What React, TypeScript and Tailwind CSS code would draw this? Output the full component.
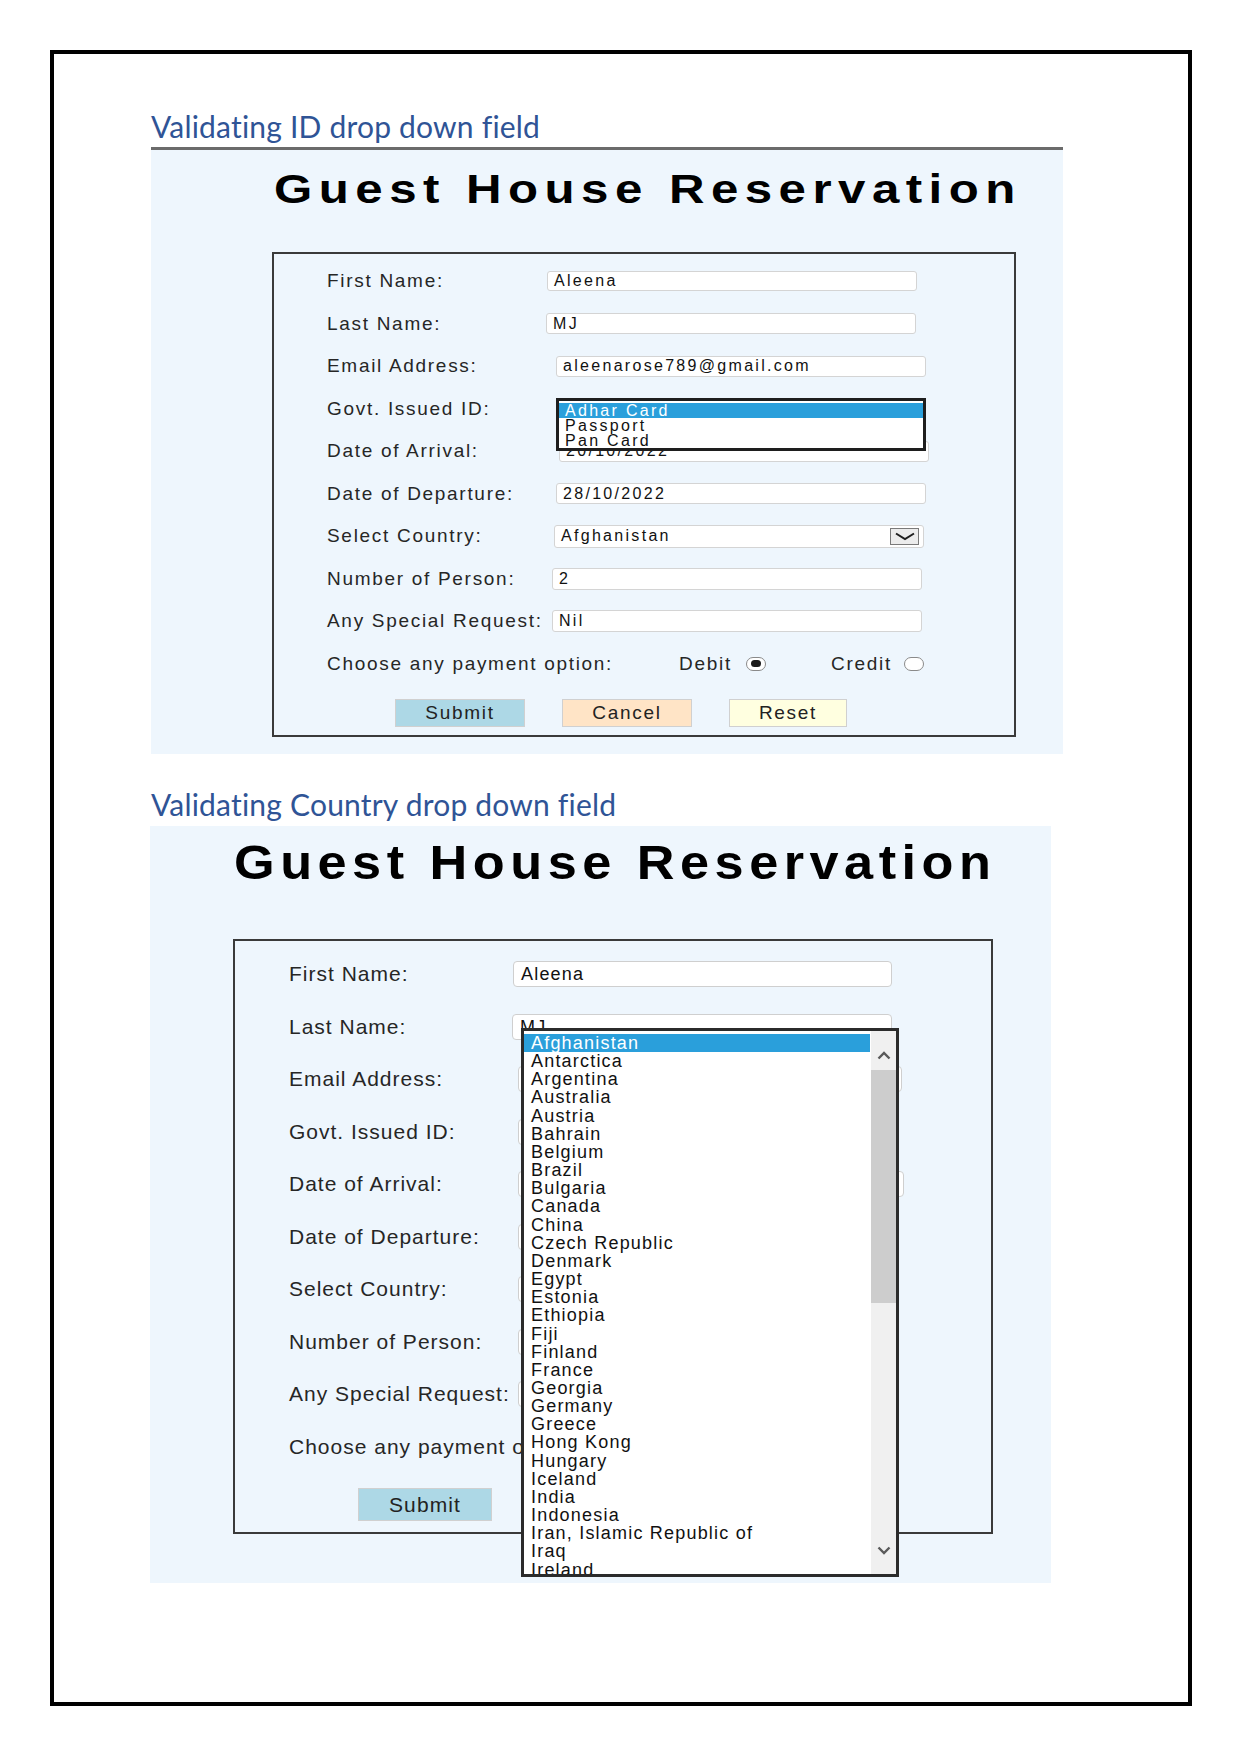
import type { ReactNode } from 'react';

const countries = [
  'Afghanistan', 'Antarctica', 'Argentina', 'Australia', 'Austria', 'Bahrain', 'Belgium', 'Brazil',
  'Bulgaria', 'Canada', 'China', 'Czech Republic', 'Denmark', 'Egypt', 'Estonia', 'Ethiopia', 'Fiji',
  'Finland', 'France', 'Georgia', 'Germany', 'Greece', 'Hong Kong', 'Hungary', 'Iceland', 'India',
  'Indonesia', 'Iran, Islamic Republic of', 'Iraq', 'Ireland',
];

type Row = { label: string; value?: string; lw: string; h: string; kind?: 'select' };

const rowsA: Row[] = [
  { label: 'First Name:', value: 'Aleena', lw: 'w-[220px]', h: 'h-[20px]' },
  { label: 'Last Name:', value: 'MJ', lw: 'w-[219px]', h: 'h-[21px]' },
  { label: 'Email Address:', value: 'aleenarose789@gmail.com', lw: 'w-[229px]', h: 'h-[21px]' },
  { label: 'Govt. Issued ID:', lw: 'w-[229px]', h: 'h-[21px]' },
  { label: 'Date of Arrival:', value: '20/10/2022', lw: 'w-[232px]', h: 'h-[21px]' },
  { label: 'Date of Departure:', value: '28/10/2022', lw: 'w-[229px]', h: 'h-[21px]' },
  { label: 'Select Country:', value: 'Afghanistan', lw: 'w-[227px]', h: 'h-[23px]', kind: 'select' },
  { label: 'Number of Person:', value: '2', lw: 'w-[225px]', h: 'h-[22px]' },
  { label: 'Any Special Request:', value: 'Nil', lw: 'w-[225px]', h: 'h-[22px]' },
];

const rowsB: Row[] = [
  { label: 'First Name:', value: 'Aleena', lw: 'w-[224px]', h: 'w-[379px]' },
  { label: 'Last Name:', value: 'MJ', lw: 'w-[223px]', h: 'w-[380px]' },
  { label: 'Email Address:', lw: 'w-[229px]', h: 'w-[384px]' },
  { label: 'Govt. Issued ID:', lw: 'w-[229px]', h: 'w-[381px]' },
  { label: 'Date of Arrival:', lw: 'w-[229px]', h: 'w-[386px]' },
  { label: 'Date of Departure:', lw: 'w-[229px]', h: 'w-[381px]' },
  { label: 'Select Country:', lw: 'w-[229px]', h: 'w-[380px]' },
  { label: 'Number of Person:', lw: 'w-[229px]', h: 'w-[380px]' },
  { label: 'Any Special Request:', lw: 'w-[229px]', h: 'w-[380px]' },
];

function Chevron({ up }: { up?: boolean }) {
  return (
    <svg width="14" height="9" viewBox="0 0 14 9" fill="none">
      <polyline
        points={up ? '1.5,7.5 7,2 12.5,7.5' : '1.5,1.5 7,7 12.5,1.5'}
        stroke="#5a5a5a"
        strokeWidth="2.4"
      />
    </svg>
  );
}

function Radio({ checked }: { checked?: boolean }) {
  return (
    <div className="w-[20px] h-[14px] rounded-full border border-[#8a8a8a] bg-white flex items-center justify-center">
      {checked && <div className="w-[10px] h-[7px] rounded-full bg-[#1a1a1a]" />}
    </div>
  );
}

function Button({ children, cls }: { children: ReactNode; cls: string }) {
  return (
    <div className={`${cls} border border-[#d0d0d0] flex items-center justify-center text-[#222]`}>
      {children}
    </div>
  );
}

function FormA() {
  return (
    <div className="ml-[121px] mt-[42px] w-[744px] h-[485px] border-2 border-[#3a3a3a] relative pt-[6px] pl-[53px] text-[19px] tracking-[1.7px] text-[#262626]">
      {rowsA.map((r) => (
        <div key={r.label} className="flex items-center h-[42.5px]">
          <span className={`${r.lw} leading-[20px] whitespace-nowrap`}>{r.label}</span>
          <div
            className={`w-[370px] ${r.h} bg-white border border-[#d4d4d4] rounded-[3px] flex items-center justify-between pl-[6px] pr-[4px] text-[16px] tracking-[2.3px] text-[#111]`}
          >
            <span className="leading-[16px]">{r.value}</span>
            {r.kind === 'select' && (
              <div className="w-[29px] h-[17px] bg-[#ececec] border border-[#7a7a7a] flex items-center justify-center">
                <svg width="22" height="9" viewBox="0 0 22 9" fill="none">
                  <polyline points="2,1.5 11,7 20,1.5" stroke="#1e1e1e" strokeWidth="2" />
                </svg>
              </div>
            )}
          </div>
        </div>
      ))}
      <div className="flex items-center h-[42.5px]">
        <span className="w-[352px] leading-[20px] whitespace-nowrap">Choose any payment option:</span>
        <span className="w-[67px] leading-[20px]">Debit</span>
        <Radio checked />
        <span className="ml-[65px] w-[73px] leading-[20px]">Credit</span>
        <Radio />
      </div>
      <div className="mt-[14px] flex gap-[37px] pl-[68px]">
        <Button cls="w-[130px] h-[28px] bg-[#add8e6]">Submit</Button>
        <Button cls="w-[130px] h-[28px] bg-[#ffe4c6]">Cancel</Button>
        <Button cls="w-[118px] h-[28px] bg-[#ffffe0]">Reset</Button>
      </div>

      {/* open ID list */}
      <div className="absolute left-[282px] top-[144px] w-[370px] h-[53px] border-[3px] border-[#1e1e1e] bg-white pt-[2px] text-[16px] tracking-[2.3px] text-[#111]">
        <div className="h-[15px] leading-[15px] pl-[6px] bg-[#2a9fdb] text-white">Adhar Card</div>
        <div className="h-[15px] leading-[15px] pl-[6px]">Passport</div>
        <div className="h-[15px] leading-[15px] pl-[6px]">Pan Card</div>
      </div>
    </div>
  );
}

function FormB() {
  return (
    <div className="ml-[83px] mt-[52.5px] w-[760px] h-[595px] border-2 border-[#3a3a3a] relative pt-[7px] pl-[54px] text-[21px] tracking-[1px] text-[#262626]">
      {rowsB.map((r) => (
        <div key={r.label} className="flex items-center h-[52.5px]">
          <span className={`${r.lw} leading-[22px] whitespace-nowrap`}>{r.label}</span>
          <div
            className={`${r.h} h-[26px] bg-white border border-[#cfcfcf] rounded-[4px] flex items-center pl-[7px] text-[18px] tracking-[1.2px] text-[#111]`}
          >
            <span className="leading-[18px]">{r.value}</span>
          </div>
        </div>
      ))}
      <div className="flex items-center h-[52.5px]">
        <span className="w-[232px] overflow-hidden leading-[22px] whitespace-nowrap">Choose any payment option:</span>
      </div>
      <div className="mt-[15px] pl-[69px]">
        <Button cls="w-[134px] h-[33px] bg-[#add8e6] tracking-[1.1px]">Submit</Button>
      </div>

      {/* open country list */}
      <div className="absolute left-[286px] top-[87px] w-[378px] h-[549px] border-[3px] border-[#2b2b2b] bg-white flex">
        <div className="flex-1 pt-[3px] overflow-hidden text-[18px] tracking-[1.2px] text-[#111]">
          {countries.map((c, i) => (
            <div
              key={c}
              className={
                i === 0
                  ? 'h-[18.17px] leading-[18px] pl-[7px] mr-[1px] bg-[#2a9fdb] text-white whitespace-nowrap'
                  : 'h-[18.17px] leading-[18px] pl-[7px] whitespace-nowrap'
              }
            >
              {c}
            </div>
          ))}
        </div>
        <div className="w-[25px] bg-[#f0f0f0] flex flex-col">
          <div className="h-[39px] pt-[9px] flex items-center justify-center">
            <Chevron up />
          </div>
          <div className="h-[233px] bg-[#cdcdcd]" />
          <div className="flex-1" />
          <div className="h-[39px] pb-[9px] flex items-center justify-center">
            <Chevron />
          </div>
        </div>
      </div>
    </div>
  );
}

export default function App() {
  return (
    <div className="w-[1241px] h-[1755px] bg-white pt-[50px] pl-[50px] font-['Liberation_Sans',Arial,sans-serif]">
      <div className="w-[1142px] h-[1656px] border-4 border-black pl-[97px] pt-[56px]">
        <h2 className="font-['Lato',sans-serif] font-normal text-[30px] leading-[32px] tracking-[0.2px] text-[#2f5496] whitespace-nowrap">
          Validating ID drop down field
        </h2>
        <div className="mt-[5px] w-[912px] h-[3px] bg-[#6b6b6b]" />
        <div className="w-[912px] h-[604px] bg-[#eef6fd] pt-[19px]">
          <div className="ml-[123px] h-[41px]">
            <span className="inline-block origin-left scale-x-[1.2] text-[41px] leading-[41px] font-bold tracking-[5.4px] text-black whitespace-nowrap">
              Guest House Reservation
            </span>
          </div>
          <FormA />
        </div>

        <h2 className="mt-[34px] font-['Lato',sans-serif] font-normal text-[30px] leading-[32px] tracking-[0.2px] text-[#2f5496] whitespace-nowrap">
          Validating Country drop down field
        </h2>
        <div className="mt-[6px] -ml-px w-[901px] h-[757px] bg-[#eef6fd] pt-[13px]">
          <div className="ml-[84px] h-[47.5px]">
            <span className="inline-block origin-left scale-x-[1.1] text-[47.5px] leading-[47.5px] font-bold tracking-[5px] text-black whitespace-nowrap">
              Guest House Reservation
            </span>
          </div>
          <FormB />
        </div>
      </div>
    </div>
  );
}
